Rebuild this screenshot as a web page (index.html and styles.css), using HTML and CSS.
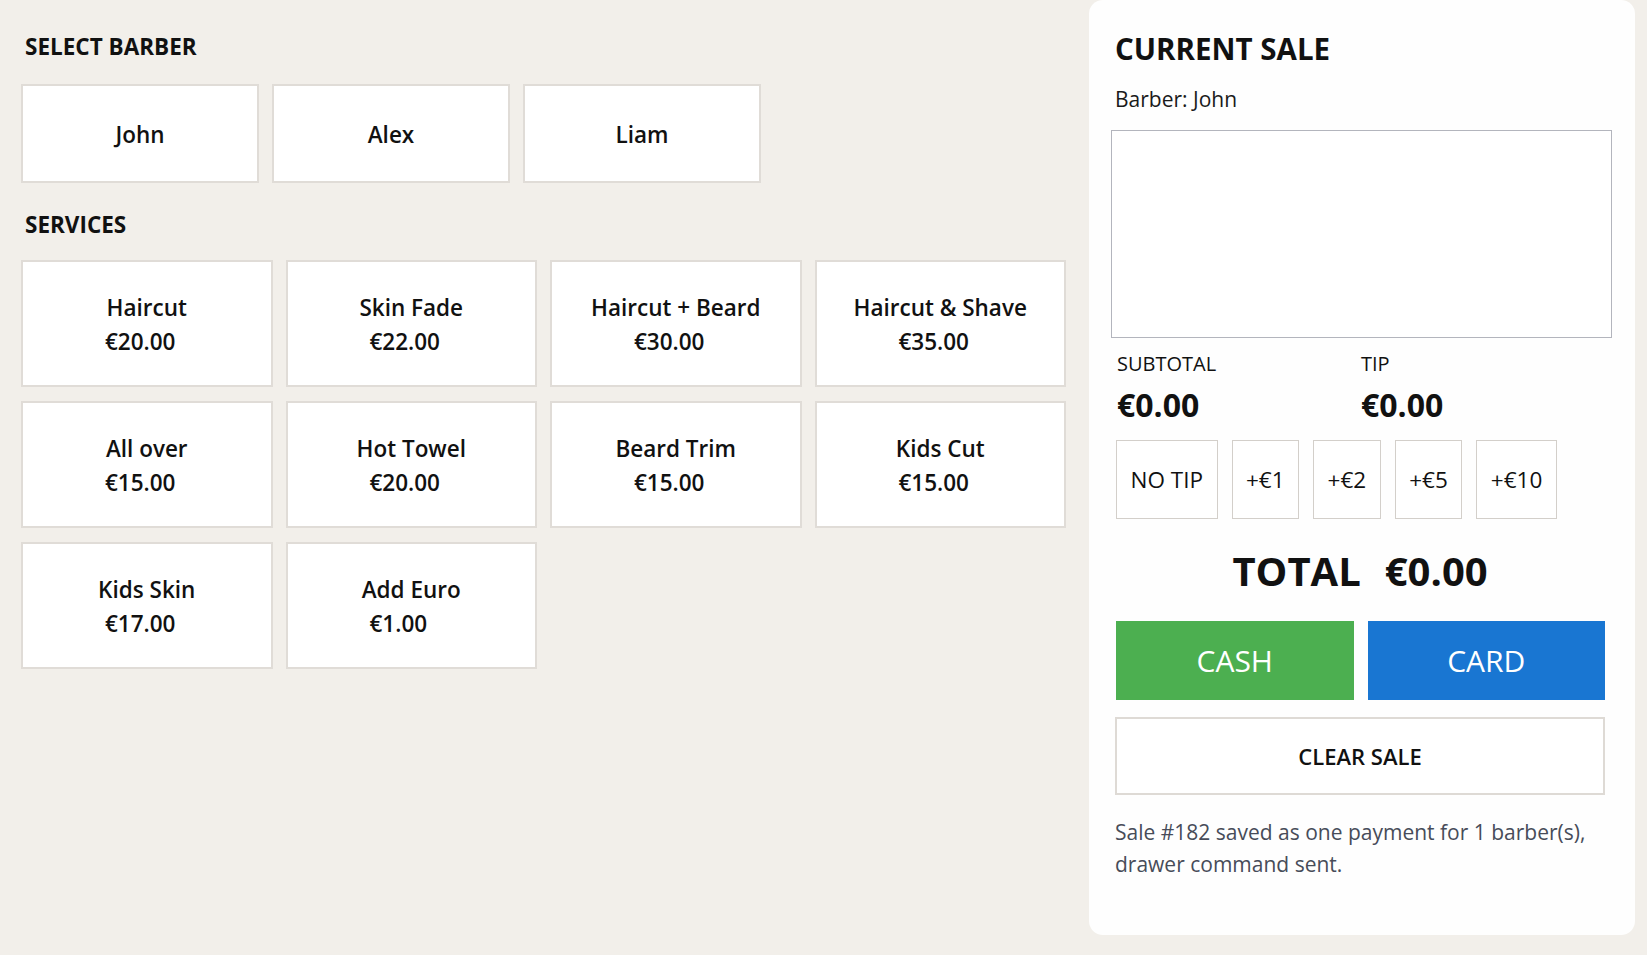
FILE: index.html
```html
<!DOCTYPE html>
<html lang="en">
<head>
<meta charset="utf-8">
<title>Barber POS</title>
<link rel="stylesheet" href="styles.css">
</head>
<body>
<div class="pos">
  <main class="catalog">
    <h2 class="section-title">SELECT BARBER</h2>
    <div class="barbers">
      <button class="tile barber">John</button>
      <button class="tile barber">Alex</button>
      <button class="tile barber">Liam</button>
    </div>

    <h2 class="section-title services-title">SERVICES</h2>
    <div class="services">
      <button class="tile service"><span class="svc-name">Haircut</span><span class="svc-price">€20.00</span></button>
      <button class="tile service"><span class="svc-name">Skin Fade</span><span class="svc-price">€22.00</span></button>
      <button class="tile service"><span class="svc-name">Haircut + Beard</span><span class="svc-price">€30.00</span></button>
      <button class="tile service"><span class="svc-name">Haircut &amp; Shave</span><span class="svc-price">€35.00</span></button>
      <button class="tile service"><span class="svc-name">All over</span><span class="svc-price">€15.00</span></button>
      <button class="tile service"><span class="svc-name">Hot Towel</span><span class="svc-price">€20.00</span></button>
      <button class="tile service"><span class="svc-name">Beard Trim</span><span class="svc-price">€15.00</span></button>
      <button class="tile service"><span class="svc-name">Kids Cut</span><span class="svc-price">€15.00</span></button>
      <button class="tile service"><span class="svc-name">Kids Skin</span><span class="svc-price">€17.00</span></button>
      <button class="tile service"><span class="svc-name">Add Euro</span><span class="svc-price">€1.00</span></button>
    </div>
  </main>

  <aside class="sale">
    <h1 class="sale-title">CURRENT SALE</h1>
    <div class="sale-barber">Barber: John</div>
    <div class="sale-items"></div>

    <div class="sums">
      <div class="sum">
        <div class="sum-label">SUBTOTAL</div>
        <div class="sum-value">€0.00</div>
      </div>
      <div class="sum">
        <div class="sum-label">TIP</div>
        <div class="sum-value">€0.00</div>
      </div>
    </div>

    <div class="tips">
      <button class="tip">NO TIP</button>
      <button class="tip">+€1</button>
      <button class="tip">+€2</button>
      <button class="tip">+€5</button>
      <button class="tip">+€10</button>
    </div>

    <div class="total"><span>TOTAL</span><span>€0.00</span></div>

    <div class="pay">
      <button class="pay-btn cash">CASH</button>
      <button class="pay-btn card">CARD</button>
    </div>

    <button class="clear">CLEAR SALE</button>

    <p class="status">Sale #182 saved as one payment for 1 barber(s), drawer command sent.</p>
  </aside>
</div>
</body>
</html>
```

FILE: styles.css
```css
* {
  box-sizing: border-box;
}

html, body {
  margin: 0;
  padding: 0;
}

body {
  background: #f2efea;
  color: #111;
  font-family: "Open Sans", "Noto Sans", "DejaVu Sans", sans-serif;
}

button {
  font-family: inherit;
  color: inherit;
  cursor: pointer;
}

.pos {
  display: flex;
  height: 100vh;
}

/* ---------- left: barbers and services ---------- */

.catalog {
  flex: 1;
  padding: 32px 0 0 21px;
}

.section-title {
  margin: 0;
  padding-left: 4px;
  font-size: 22.5px;
  line-height: 30px;
  font-weight: 700;
}

.barbers {
  display: flex;
  gap: 13px;
  margin-top: 22px;
}

.tile {
  background: #fff;
  border: 2px solid #e0dcd7;
  border-radius: 0;
  padding: 0;
}

.barber {
  width: 238px;
  height: 99px;
  padding-top: 2px;
  font-size: 22.5px;
  font-weight: 600;
}

.services-title {
  margin-top: 27px;
}

.services {
  display: grid;
  width: 1045px;
  grid-template-columns: repeat(4, 1fr);
  grid-auto-rows: 127px;
  gap: 14px 13px;
  margin-top: 20px;
}

.service {
  display: flex;
  flex-direction: column;
  justify-content: center;
  padding-top: 2px;
  font-size: 22.5px;
  font-weight: 600;
  line-height: 34px;
}

.svc-name {
  display: block;
  text-align: center;
}

/* prices sit on a shared left edge inside each tile */
.svc-price {
  display: block;
  width: 100%;
  padding-left: 82px;
  text-align: left;
}

/* ---------- right: current sale ---------- */

.sale {
  width: 546px;
  height: calc(100vh - 20px);
  margin-right: 12px;
  background: #fefefe;
  border-radius: 14px;
  padding: 29px 30px 0 26px;
  display: flex;
  flex-direction: column;
}

.sale-title {
  margin: 0;
  font-size: 29.5px;
  line-height: 40px;
  font-weight: 700;
}

.sale-barber {
  margin-top: 16px;
  font-size: 21px;
  line-height: 28px;
  color: #1a1a1a;
}

.sale-items {
  margin: 17px -7px 0 -4px;
  height: 208px;
  border: 1px solid #b3b5bd;
  background: #fff;
}

.sums {
  display: grid;
  grid-template-columns: 1fr 1fr;
  margin-top: 12px;
  padding-left: 2px;
}

.sum-label {
  font-size: 20px;
  line-height: 28px;
}

.sum-value {
  margin-top: 7px;
  font-size: 32px;
  line-height: 40px;
  font-weight: 700;
}

.tips {
  display: flex;
  gap: 14px;
  margin-top: 15px;
  padding-left: 1px;
}

.tip {
  height: 79px;
  padding: 0 13.5px;
  background: #fff;
  border: 1px solid #d3cfca;
  font-size: 22.5px;
}

.total {
  display: flex;
  justify-content: center;
  gap: 24px;
  margin-top: 27px;
  font-size: 40px;
  line-height: 50px;
  font-weight: 700;
}

.pay {
  display: flex;
  gap: 14px;
  margin-top: 25px;
  padding-left: 1px;
}

.pay-btn {
  flex: 1;
  height: 79px;
  border: none;
  color: #fff;
  font-size: 30px;
  font-weight: 500;
}

.cash {
  background: #4caf50;
}

.card {
  background: #1976d2;
}

.clear {
  margin-top: 17px;
  height: 78px;
  background: #fff;
  border: 2px solid #dedad5;
  font-size: 22px;
  font-weight: 600;
}

.status {
  margin: 21px 0 0;
  font-size: 21px;
  line-height: 32px;
  color: #474c59;
}
```
